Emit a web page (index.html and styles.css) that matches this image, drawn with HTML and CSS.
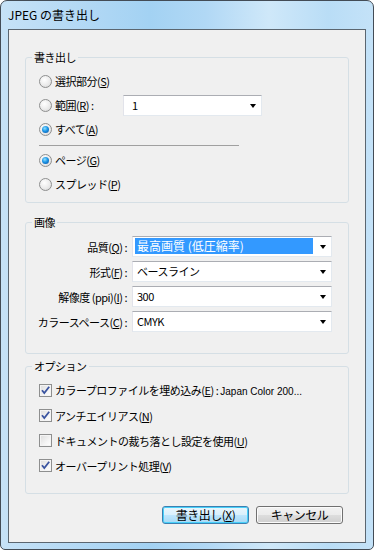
FILE: index.html
```html
<!DOCTYPE html>
<html lang="ja">
  <head>
    <meta charset="UTF-8" />
    <meta name="viewport" content="width=device-width, initial-scale=1.0" />
    <title>JPEG の書き出し</title>
    <link rel="stylesheet" href="styles.css">
  </head>
  <body>
    <div class="window">
      <div class="titlebar">JPEG の書き出し</div>

      <div class="client">
        <!-- 書き出し -->
        <fieldset class="group group-export">
          <legend>書き出し</legend>
          <div class="row"><span class="radio"></span><span class="label">選択部分(<u>S</u>)</span></div>
          <div class="row">
            <span class="range-label"><span class="radio"></span><span class="label">範囲(<u>R</u>) :</span></span>
            <div class="combo combo-range"><span class="combo-text">1</span><span class="arrow"></span></div>
          </div>
          <div class="row"><span class="radio checked"></span><span class="label">すべて(<u>A</u>)</span></div>
          <div class="sep"></div>
          <div class="row"><span class="radio checked"></span><span class="label">ページ(<u>G</u>)</span></div>
          <div class="row"><span class="radio"></span><span class="label">スプレッド(<u>P</u>)</span></div>
        </fieldset>

        <!-- 画像 -->
        <fieldset class="group group-image">
          <legend>画像</legend>
          <div class="field">
            <span class="field-label">品質(<u>Q</u>) :</span>
            <div class="combo"><span class="combo-text selected">最高画質 (低圧縮率)</span><span class="arrow"></span></div>
          </div>
          <div class="field">
            <span class="field-label">形式(<u>F</u>) :</span>
            <div class="combo"><span class="combo-text">ベースライン</span><span class="arrow"></span></div>
          </div>
          <div class="field">
            <span class="field-label">解像度 (ppi)(<u>I</u>) :</span>
            <div class="combo"><span class="combo-text">300</span><span class="arrow"></span></div>
          </div>
          <div class="field">
            <span class="field-label">カラースペース(<u>C</u>) :</span>
            <div class="combo"><span class="combo-text">CMYK</span><span class="arrow"></span></div>
          </div>
        </fieldset>

        <!-- オプション -->
        <fieldset class="group group-options">
          <legend>オプション</legend>
          <div class="crow">
            <span class="check checked"><svg width="11" height="11" viewBox="0 0 11 11"><path d="M2 5.2 L4.3 8 L9.2 1.8" /></svg></span>
            <span class="label">カラープロファイルを埋め込み(<u>E</u>) : <span class="note">Japan Color 200...</span></span>
          </div>
          <div class="crow">
            <span class="check checked"><svg width="11" height="11" viewBox="0 0 11 11"><path d="M2 5.2 L4.3 8 L9.2 1.8" /></svg></span>
            <span class="label">アンチエイリアス(<u>N</u>)</span>
          </div>
          <div class="crow">
            <span class="check"></span>
            <span class="label">ドキュメントの裁ち落とし設定を使用(<u>U</u>)</span>
          </div>
          <div class="crow">
            <span class="check checked"><svg width="11" height="11" viewBox="0 0 11 11"><path d="M2 5.2 L4.3 8 L9.2 1.8" /></svg></span>
            <span class="label">オーバープリント処理(<u>V</u>)</span>
          </div>
        </fieldset>

        <div class="buttons">
          <button class="btn btn-default">書き出し(<u>X</u>)</button>
          <button class="btn">キャンセル</button>
        </div>
      </div>
    </div>
  </body>
</html>
```

FILE: styles.css
```css
/* General */
body {
  margin: 0;
  font-family: "Noto Sans CJK JP", "Liberation Sans", sans-serif;
  font-size: 11px;
  letter-spacing: -0.5px;
  line-height: 14px;
  color: #000;
  background: #fff;
}

u {
  text-decoration: underline;
  text-underline-offset: 1px;
}

.label {
  white-space: nowrap;
}

/* Aero frame */
.window {
  width: 374px;
  height: 550px;
  box-sizing: border-box;
  border: 1px solid #434c56;
  border-radius: 7px 7px 5px 5px;
  overflow: hidden;
  background: linear-gradient(90deg, #c6e2f7 0%, #b6daf5 18%, #a3d2f3 40%, #b1d8f5 55%, #cfe8f9 72%, #b9ddf6 88%, #c4e2f8 100%);
}

.titlebar {
  height: 28px;
  box-sizing: border-box;
  padding: 7px 0 0 7px;
  font-size: 12px;
  letter-spacing: 0;
}

/* Client area */
.client {
  margin: 0 7px;
  height: 514px;
  box-sizing: border-box;
  border: 1px solid #5b6670;
  background: #f0f0f0;
  padding: 20px 16px 0;
}

/* Group boxes */
.group {
  margin: 0;
  min-width: 0;
  border: 1px solid #d5dfe5;
  border-radius: 3px;
}

.group legend {
  margin-left: 6px;
  padding: 0 2px;
  line-height: 14px;
}

.group-export {
  padding: 5px 0 6px;
}

.group-image {
  margin-top: 12px;
  padding: 5px 16px 19px 0;
}

.group-options {
  margin-top: 5px;
  padding: 5px 0 15px;
}

/* Radio rows */
.row {
  display: flex;
  align-items: center;
  height: 24px;
  margin-left: 13px;
}

.radio {
  position: relative;
  flex: none;
  width: 13px;
  height: 13px;
  box-sizing: border-box;
  margin-right: 3px;
  border: 1px solid #8e8f8f;
  border-radius: 50%;
  background: radial-gradient(circle at 40% 35%, #ffffff 0%, #ebebeb 55%, #d2d2d2 100%);
}

.radio.checked::after {
  content: "";
  position: absolute;
  top: 2px;
  left: 2px;
  width: 7px;
  height: 7px;
  border-radius: 50%;
  background: radial-gradient(circle at 40% 35%, #8fe0ff 0%, #1c95e6 45%, #0b4a9a 100%);
}

.range-label {
  display: flex;
  align-items: center;
  width: 84px;
}

.sep {
  width: 200px;
  height: 1px;
  margin: 4px 0 2px 13px;
  background: #a0a0a0;
}

/* Combo boxes */
.combo {
  display: flex;
  align-items: center;
  width: 200px;
  height: 21px;
  box-sizing: border-box;
  padding: 1px 4px 2px 2px;
  background: #fff;
  border: 1px solid #e3e9ef;
  border-top-color: #abadb3;
  border-left-color: #e2e3ea;
}

.combo-range {
  width: 139px;
  padding-left: 6px;
}

.combo-text {
  flex: 1;
  height: 16px;
  line-height: 16px;
  padding-left: 2px;
  white-space: nowrap;
}

.combo-text.selected {
  flex: none;
  width: 176px;
  background: #3399ff;
  color: #fff;
  font-size: 12px;
  letter-spacing: 0;
}

.arrow {
  flex: none;
  width: 0;
  height: 0;
  margin: 2px 1px 0 auto;
  border-left: 3.5px solid transparent;
  border-right: 3.5px solid transparent;
  border-top: 4px solid #000;
}

/* Image fields */
.field {
  display: grid;
  grid-template-columns: 101px 200px;
  column-gap: 5px;
  align-items: center;
  height: 25px;
}

.field-label {
  text-align: right;
  white-space: nowrap;
}

/* Checkbox rows */
.crow {
  display: flex;
  align-items: center;
  height: 25px;
  margin-left: 13px;
}

.check {
  flex: none;
  width: 13px;
  height: 13px;
  box-sizing: border-box;
  margin-right: 3px;
  border: 1px solid #8e8f8f;
  background: linear-gradient(135deg, #dcdcdc 0%, #f4f4f4 60%, #ffffff 100%);
  box-shadow: inset 0 0 0 1px #f4f4f4;
}

.check svg {
  display: block;
}

.check path {
  fill: none;
  stroke: #3a54a0;
  stroke-width: 1.8;
}

.note {
  font-family: "Liberation Sans", sans-serif;
  font-size: 10px;
  letter-spacing: 0;
}

/* Buttons */
.buttons {
  display: flex;
  justify-content: flex-end;
  gap: 7px;
  margin-top: 12px;
  padding-right: 6px;
}

.btn {
  width: 87px;
  height: 18px;
  box-sizing: border-box;
  padding: 0;
  font: inherit;
  font-size: 12px;
  letter-spacing: -0.5px;
  line-height: 16px;
  color: #000;
  border: 1px solid #707070;
  border-radius: 3px;
  background: linear-gradient(#f2f2f2 0%, #ebebeb 50%, #dddddd 51%, #cfcfcf 100%);
  box-shadow: inset 0 0 0 1px #fbfbfb;
}

.btn-default {
  border-color: #3c7fb1;
  background: linear-gradient(#eaf6fd 0%, #d9f0fc 50%, #bee6fd 51%, #a7d9f5 100%);
  box-shadow: inset 0 0 0 1px #48d0f9;
}
```
